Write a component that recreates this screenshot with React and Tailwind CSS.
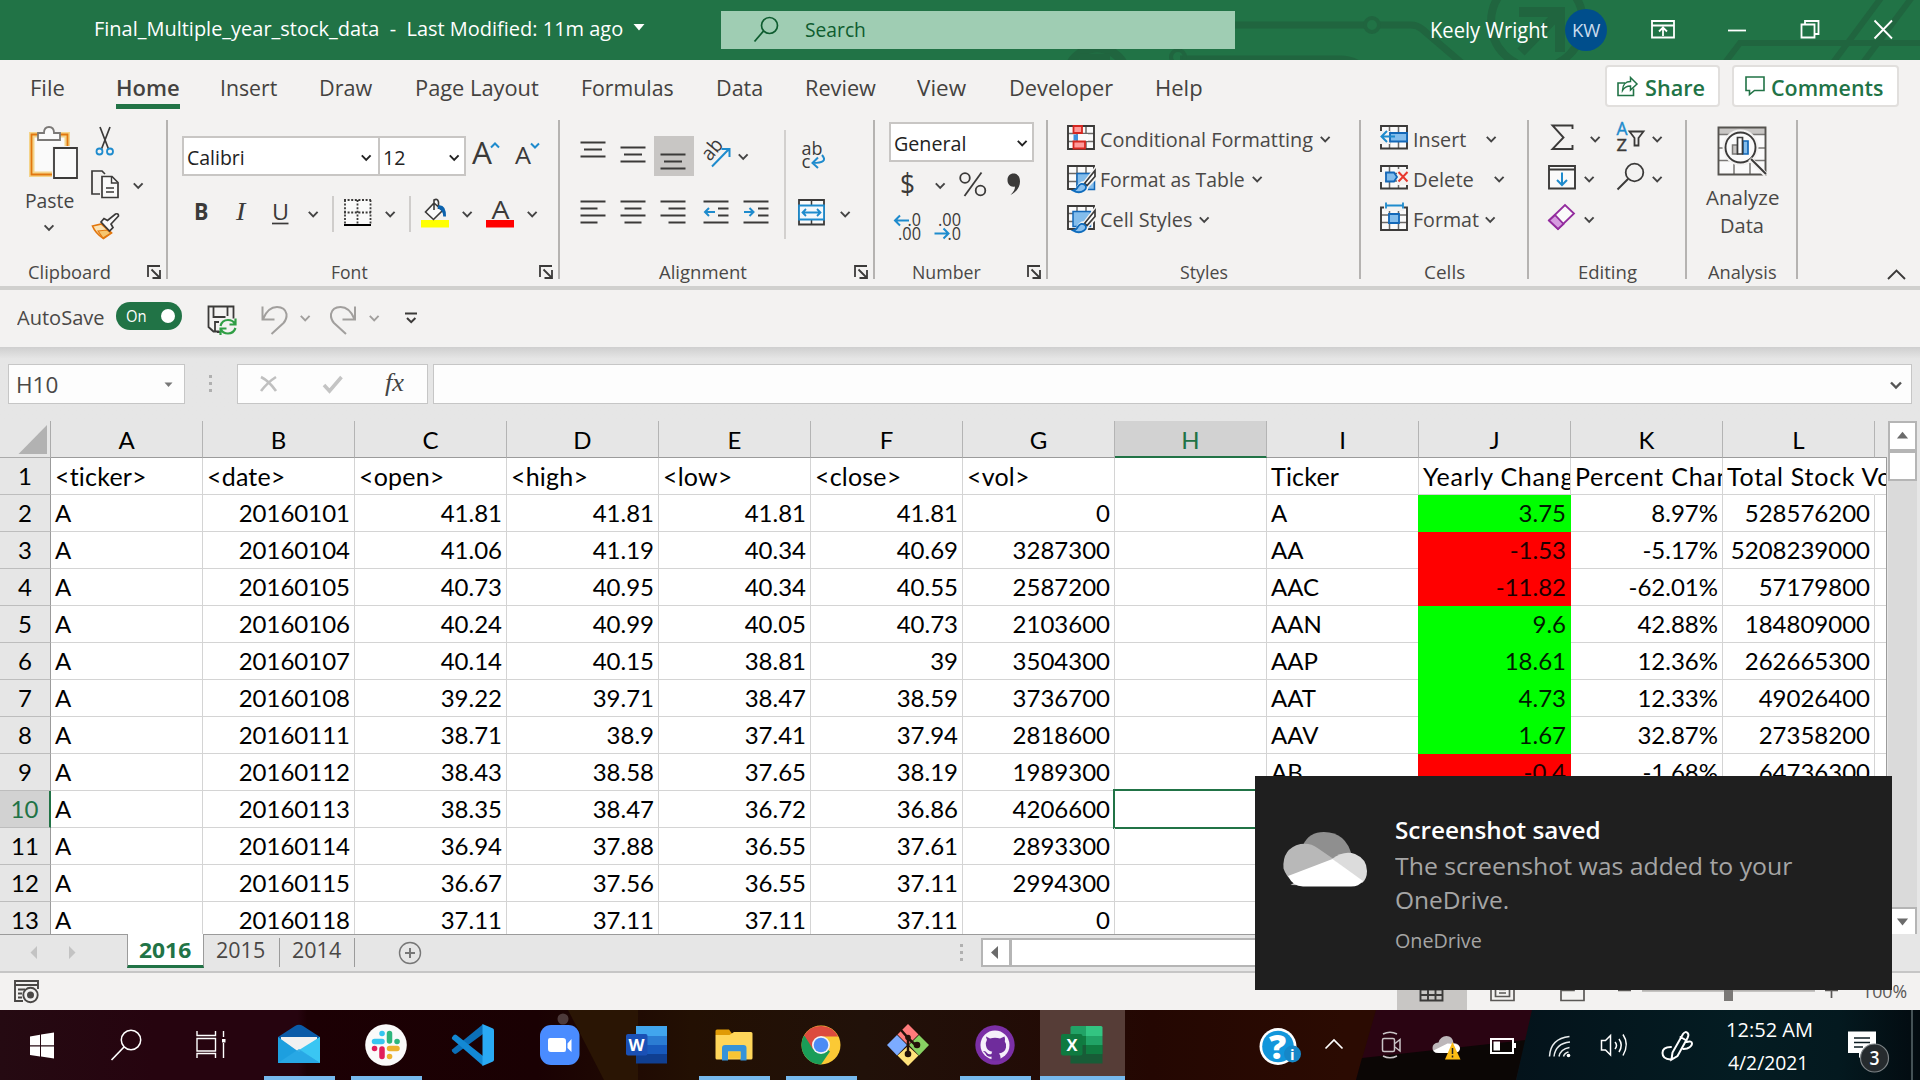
import { useLayoutEffect, useRef } from "react";

/* One line of text, condensed or widened to the width of its box. */
function T({ className = "", children }) {
  const box = useRef(null);
  const line = useRef(null);
  useLayoutEffect(() => {
    const w = line.current.offsetWidth;
    if (w) line.current.style.transform = `scaleX(${box.current.clientWidth / w})`;
  }, []);
  return (
    <div ref={box} className={`shrink-0 whitespace-pre ${className}`}>
      <span ref={line} className="inline-block origin-left">{children}</span>
    </div>
  );
}

/* Drawing whose view box also gives its size. */
function P({ b, className = "", children }) {
  const [, , w, h] = b.split(" ");
  return (
    <svg viewBox={b} width={w} height={h} fill="none" className={`block shrink-0 overflow-visible ${className}`}>
      {children}
    </svg>
  );
}

const INK = "#3b3a39";
const BLUE = "#1e8bcd";

const Cv = ({ x, y, c = "#444" }) => (
  <path d={`M${x + 0.8} ${y + 0.8}l4.4 4.6 4.4-4.6`} stroke={c} strokeWidth="1.9" />
);

const Lines = ({ list, c = INK }) =>
  list.map(([x, y, w]) => <path key={`${x}-${y}`} d={`M${x} ${y}h${w}`} stroke={c} strokeWidth="2" />);

const Launch = ({ className }) => (
  <P b="0 0 14 14" className={className}>
    <path d="M1 12V1h12M4.5 4.5l7.5 7.5M13 5v8H5.5" stroke={INK} strokeWidth="1.8" />
  </P>
);

function Group({ className, label, children }) {
  return (
    <div className={`flex h-[159px] shrink-0 flex-col border-r-2 border-[#b5b3b1] ${className}`}>
      <div className="h-[139px]">{children}</div>
      <div className="flex h-[20px] text-[18.5px] leading-[25px] text-[#4a4846]">{label}</div>
    </div>
  );
}

/* ---------- title bar ---------- */
function TitleBar() {
  return (
    <div className="relative h-[60px] bg-[#217346] text-white">
      <svg viewBox="0 0 1920 60" width="1920" height="60" fill="none" className="absolute inset-0">
        <g stroke="#20653f" strokeWidth="7">
          <path d="M1230 25h137M1377 25h34q6 0 11 4l42 36M1180 59h160q12 0 20 6" />
          <circle cx="1372" cy="25" r="7" strokeWidth="4" />
          <circle cx="1097" cy="78" r="30" strokeWidth="9" />
          <path d="M1080 57h30" />
          <circle cx="1178" cy="57" r="7" strokeWidth="4" />
          <circle cx="1537" cy="22" r="46" strokeWidth="8" />
          <path d="M1519 12h41v40M1560 12l-39 40" strokeWidth="10" />
          <path d="M1724 64l16-21h180M1832 64l52-70M1862 64l60-80" strokeWidth="6" />
        </g>
      </svg>
      <div className="relative flex h-[60px]">
        <T className="ml-[94px] w-[529px] text-[20.5px] leading-[57px]">{"Final_Multiple_year_stock_data  -  Last Modified: 11m ago"}</T>
        <P b="633 0 12 60" className="ml-[10px]"><path d="M633.5 24h11l-5.5 6.5z" fill="#fff" /></P>
        <div className="mt-[11px] ml-[76px] flex h-[38px] w-[514px] bg-[#9fcdb3]">
          <P b="752 11 28 38" className="ml-[31px]">
            <circle cx="769.500" cy="25.500" r="8" stroke="#0e5c2f" strokeWidth="1.7" />
            <path d="M763.500 31l-9 10.500" stroke="#0e5c2f" strokeWidth="1.8" />
          </P>
          <T className="ml-[25px] w-[61px] text-[20.5px] leading-[36px] text-[#0e5c2f]">Search</T>
        </div>
        <T className="ml-[195px] w-[118px] text-[21px] leading-[60px]">Keely Wright</T>
        <div className="mt-[9px] ml-[17px] flex h-[42px] w-[42px] items-center justify-center rounded-full bg-[#004e8c] text-[#c9dcee]">
          <T className="w-[28px] text-[18.5px] leading-[42px]">KW</T>
        </div>
        <P b="1648 0 250 60" className="ml-[41px]">
          <g stroke="#fff" strokeWidth="1.8">
            <path d="M1652 21h22v16.500h-22zM1652 25.500h22M1663 36v-8M1659 31.500l4-4 4 4" />
            <path d="M1728 30.500h18" />
            <path d="M1801.500 24.500h13v13h-13zM1805 24v-3h13.500v13h-3.500" />
            <path d="M1874.500 20.500l17.500 18M1892 20.500l-17.500 18" />
          </g>
        </P>
      </div>
    </div>
  );
}

/* ---------- ribbon tabs ---------- */
function Tabs() {
  return (
    <div className="flex h-[60px] text-[22px] leading-[55px] text-[#444240]">
      <T className="ml-[30px] w-[35px]">File</T>
      <div className="ml-[51px] w-[64px]">
        <T className="h-[44px] w-[64px] font-semibold">Home</T>
        <div className="h-[5px] bg-[#217346]" />
      </div>
      <T className="ml-[40px] w-[57px]">Insert</T>
      <T className="ml-[42px] w-[53px]">Draw</T>
      <T className="ml-[43px] w-[124px]">Page Layout</T>
      <T className="ml-[42px] w-[93px]">Formulas</T>
      <T className="ml-[42px] w-[47px]">Data</T>
      <T className="ml-[42px] w-[71px]">Review</T>
      <T className="ml-[41px] w-[49px]">View</T>
      <T className="ml-[43px] w-[104px]">Developer</T>
      <T className="ml-[42px] w-[48px]">Help</T>
      <div className="mt-[5px] ml-[402px] flex h-[42px] w-[115px] rounded-[4px] border-2 border-[#e1dfdd] bg-white font-semibold text-[#217346]">
        <P b="1615 67 26 38" className="ml-[7px]">
          <path d="M1626 83h-7v12.500h15.500v-7" stroke="#217346" strokeWidth="1.6" />
          <path d="M1623.500 90.500c0-6 3.500-9 8-9v-4l6.500 6.500-6.500 6v-4c-4 0-6 1-8 4.500z" stroke="#217346" strokeWidth="1.5" />
        </P>
        <T className="ml-[5px] w-[60px] leading-[41px]">Share</T>
      </div>
      <div className="mt-[5px] ml-[12px] flex h-[42px] w-[167px] rounded-[4px] border-2 border-[#e1dfdd] bg-white font-semibold text-[#217346]">
        <P b="1744 67 24 38" className="ml-[9px]">
          <path d="M1747 77h18v13.500h-9.500l-5 4v-4h-3.500z" stroke="#217346" strokeWidth="1.6" />
        </P>
        <T className="ml-[4px] w-[112px] leading-[41px]">Comments</T>
      </div>
    </div>
  );
}

/* ---------- ribbon groups ---------- */
function Clipboard() {
  return (
    <Group className="w-[168px]" label={<><T className="ml-[28px] w-[83px]">Clipboard</T><Launch className="mt-[6px] ml-[36px]" /></>}>
      <div className="flex">
        <div className="w-[90px] pt-[6px]">
          <P b="30 126 48 54" className="ml-[30px]">
            <path d="M32 135h35v39H32z" fill="#fafafa" stroke="#f4d48a" strokeWidth="6" />
            <path d="M31.500 134.500h36v40h-36z" stroke="#e2770e" strokeWidth="1.800" />
            <path d="M34.500 137.500h30v34h-30z" fill="#fafafa" />
            <path d="M38 140v-7h6q0-6 5-6t5 6h6v7z" fill="#fafafa" stroke="#7a7876" strokeWidth="1.800" />
            <path d="M52 146h27v34H52z" fill="#f3f2f1" />
            <path d="M54 148h23v30H54z" fill="#fafafa" stroke={INK} strokeWidth="1.800" />
          </P>
          <T className="mt-[5px] ml-[25px] w-[49px] text-[20.5px] leading-[30px] text-[#444]">Paste</T>
          <P b="44 224 12 8" className="mt-[9px] ml-[44px]"><Cv x={43.800} y={224.500} /></P>
        </div>
        <div>
          <P b="90 120 30 40">
            <path d="M100 127l8.500 22M110 127l-8.500 22" stroke={INK} strokeWidth="1.700" />
            <circle cx="99.500" cy="151.500" r="3" stroke={BLUE} strokeWidth="1.800" />
            <circle cx="110" cy="151.500" r="3" stroke={BLUE} strokeWidth="1.800" />
          </P>
          <P b="90 165 56 38" className="mt-[5px]">
            <path d="M100 194h-8v-23h10l3 3" stroke={INK} strokeWidth="1.700" />
            <path d="M102 176.500h10l6 6v15h-16z" fill="#fafafa" stroke={INK} strokeWidth="1.700" />
            <path d="M111.500 177v6h6M106 188h8M106 192h8" stroke={INK} strokeWidth="1.400" />
            <Cv x={133} y={182.500} />
          </P>
          <P b="90 208 32 36" className="mt-[5px]">
            <path d="M92.500 226l9-2 10 9-8 5.500q-8-5-11-12.500z" fill="#fbe3b4" stroke="#e2770e" strokeWidth="1.700" />
            <path d="M98 231l9-1 4 3-8 5z" fill="#f6c66f" stroke="#e2770e" strokeWidth="1.200" />
            <path d="M101 222l3-3.500 3.500 2 8-6.500q3-1 3 2l-7.500 8 2 3.500-3.500 3.500z" fill="#fafafa" stroke={INK} strokeWidth="1.700" />
          </P>
        </div>
      </div>
    </Group>
  );
}

function FontGroup() {
  return (
    <Group className="w-[392px]" label={<><T className="ml-[163px] w-[37px]">Font</T><Launch className="mt-[6px] ml-[171px]" /></>}>
      <div className="flex pt-[16px] text-[20.500px]">
        <div className="mr-[-2px] ml-[14px] flex h-[40px] w-[198px] border-2 border-[#c8c6c4] bg-white text-[#222]">
          <T className="ml-[3px] w-[58px] leading-[38px]">Calibri</T>
          <P b="360 138 14 36" className="ml-[115px]"><Cv x={361} y={154.500} c="#222" /></P>
        </div>
        <div className="flex h-[40px] w-[88px] border-2 border-[#c8c6c4] bg-white text-[#222]">
          <T className="ml-[3px] w-[22px] leading-[38px]">12</T>
          <P b="448 138 14 36" className="ml-[43px]"><Cv x={449} y={154.500} c="#222" /></P>
        </div>
        <P b="470 136 74 40" className="ml-[4px]">
          <text x="472" y="164" textLength="20" lengthAdjust="spacingAndGlyphs" fontSize="31" fill={INK}>A</text>
          <text x="515" y="164" textLength="16" lengthAdjust="spacingAndGlyphs" fontSize="23" fill={INK}>A</text>
          <path d="M491 147.500l4-4 4 4M531 143.500l4 4 4-4" stroke={BLUE} strokeWidth="2" />
        </P>
      </div>
      <div className="mt-[20px] flex h-[36px] text-[22px] leading-[31px] text-[#3b3a39]">
        <T className="ml-[26px] w-[14px] text-[23px] leading-[30px] font-bold">B</T>
        <T className="ml-[28px] w-[9px] font-[Liberation_Serif] text-[25px] leading-[31px] italic">I</T>
        <T className="ml-[27px] w-[17px]">U</T>
        <P b="270 196 50 36" className="ml-[-19px]">
          <path d="M272 223.500h16.500" stroke={INK} strokeWidth="1.700" />
          <Cv x={308} y={211} />
        </P>
        <div className="ml-[12px] w-[2px] bg-[#cfcdcb]" />
        <P b="342 196 56 36" className="ml-[8px]">
          <path d="M345 200h26v24h-26z" fill="#fafafa" />
          <path d="M344 200h27M345 200v24M370.500 200v24M357.500 200v24M344 212.500h27" stroke={INK} strokeWidth="1.800" strokeDasharray="2 1.600" />
          <path d="M344 225h27" stroke="#000" strokeWidth="2" />
          <Cv x={385} y={211} />
        </P>
        <div className="ml-[11px] w-[2px] bg-[#cfcdcb]" />
        <P b="419 196 56 36" className="ml-[8px]">
          <path d="M421 220h28v7.500h-28z" fill="#ff0" />
          <path d="M434 203l-8.500 9 8 7.500 9-9zM434 210v-10q3.500-2 4.500 2v7" fill="#fafafa" stroke={INK} strokeWidth="1.600" />
          <path d="M438 205.500q8-1.500 8 11h-2.800q0-6-5.200-8z" fill="#0b62ad" />
          <Cv x={462} y={211} />
        </P>
        <P b="484 196 60 36" className="ml-[9px]">
          <text x="491.500" y="218.500" textLength="18" lengthAdjust="spacingAndGlyphs" fontSize="26" fill={INK}>A</text>
          <path d="M486 220h28v7.500h-28z" fill="#f00" />
          <Cv x={527} y={211} />
        </P>
      </div>
    </Group>
  );
}

function Alignment() {
  return (
    <Group className="w-[315px]" label={<><T className="ml-[99px] w-[88px]">Alignment</T><Launch className="mt-[6px] ml-[107px]" /></>}>
      <div className="flex">
        <div className="w-[224px] pt-[16px]">
          <div className="flex">
            <P b="578 136 72 40" className="ml-[18px]">
              <Lines list={[[580.5, 142.500, 25], [584, 149.500, 18], [580.5, 156.500, 25], [620.5, 147.500, 25], [624, 154.500, 18], [620.5, 161.500, 25]]} />
            </P>
            <P b="654 136 40 40" className="ml-[4px] bg-[#c8c6c4]">
              <Lines list={[[660.500, 154.500, 25], [664, 161.500, 18], [660.500, 168.500, 25]]} />
            </P>
            <P b="698 136 54 40" className="ml-[4px]">
              <text x="710" y="162" transform="rotate(-50 710 162)" fontSize="20" textLength="22" lengthAdjust="spacingAndGlyphs" fill={INK}>ab</text>
              <path d="M712 166.500l17-17.500M721.500 149h8v8" stroke={BLUE} strokeWidth="2" />
              <Cv x={738} y={153.500} />
            </P>
          </div>
          <P b="578 192 196 40" className="mt-[16px] ml-[18px]">
            <Lines list={[[580.5, 201.500, 25], [580.5, 208.500, 17], [580.5, 215.500, 25], [580.5, 222.500, 17], [620.5, 201.500, 25], [624.5, 208.500, 17], [620.5, 215.500, 25], [624.5, 222.500, 17], [660.500, 201.500, 25], [668.500, 208.500, 17], [660.500, 215.500, 25], [668.500, 222.500, 17], [703.500, 201.500, 25], [718, 208.500, 10.500], [718, 215.500, 10.500], [703.500, 222.500, 25], [743.500, 201.500, 25], [758, 208.500, 10.500], [758, 215.500, 10.500], [743.500, 222.500, 25]]} />
            <path d="M715 212h-10M709 208l-4 4 4 4M744 212h10M749.500 208l4 4-4 4" stroke={BLUE} strokeWidth="2" />
          </P>
        </div>
        <div className="mt-[10px] h-[109px] w-[2px] bg-[#d2d0ce]" />
        <div className="pt-[16px]">
          <P b="798 136 34 40" className="ml-[12px]">
            <text x="801.500" y="155" fontSize="19" textLength="21" lengthAdjust="spacingAndGlyphs" fill={INK}>ab</text>
            <text x="801.500" y="167.500" fontSize="19" textLength="9" lengthAdjust="spacingAndGlyphs" fill={INK}>c</text>
            <path d="M822 155q7 8-9.500 8M818 157.500l-5.500 5.500 5.500 5" stroke={BLUE} strokeWidth="2" />
          </P>
          <P b="796 192 60 40" className="mt-[16px] ml-[10px]">
            <path d="M799 200h25v24.500h-25z" fill="#fafafa" stroke={INK} strokeWidth="1.800" />
            <path d="M811.500 200v25" stroke={INK} strokeWidth="1.500" />
            <path d="M799 205.500h25v14h-25z" fill="#f3f8fc" stroke={BLUE} strokeWidth="1.800" />
            <path d="M802.500 212.500h18M806 209l-3.500 3.500 3.500 3.500M817 209l3.500 3.500-3.500 3.500" stroke={BLUE} strokeWidth="1.800" />
            <Cv x={840} y={211} />
          </P>
        </div>
      </div>
    </Group>
  );
}

function NumberGroup() {
  return (
    <Group className="w-[173px]" label={<><T className="ml-[37px] w-[69px]">Number</T><Launch className="mt-[6px] ml-[46px]" /></>}>
      <div className="pt-[2px] pl-[14px]">
        <div className="flex h-[40px] w-[145px] border-2 border-[#c8c6c4] bg-white text-[#222]">
          <T className="ml-[3px] w-[72px] text-[20.500px] leading-[38px]">General</T>
          <P b="1016 124 14 36" className="ml-[50px]"><Cv x={1017} y={140} c="#222" /></P>
        </div>
      </div>
      <P b="889 164 145 40" className="mt-[2px] ml-[14px]">
        <text x="900" y="194" fontSize="30" textLength="15" lengthAdjust="spacingAndGlyphs" fill={INK}>$</text>
        <Cv x={935} y={182.500} />
        <circle cx="965" cy="178" r="4.800" stroke={INK} strokeWidth="1.800" />
        <circle cx="980.500" cy="190.500" r="4.800" stroke={INK} strokeWidth="1.800" />
        <path d="M981.500 172.500l-17 23.500" stroke={INK} strokeWidth="1.800" />
        <path d="M1013.500 173.500c4.500 0 6.500 3.500 6.500 8 0 6.500-4.500 11-9.500 13.500 3-3 4.500-5.500 4.500-8.500-4.500 1-7.500-2-7.500-6.500 0-4 2.500-6.500 6-6.500z" fill={INK} />
      </P>
      <P b="889 208 145 36" className="mt-[4px] ml-[14px]">
        <g fontSize="18.500" fill={INK}>
          <text x="907.500" y="225.500" textLength="13.500" lengthAdjust="spacingAndGlyphs">.0</text>
          <text x="898" y="239.500" textLength="23" lengthAdjust="spacingAndGlyphs">.00</text>
          <text x="938" y="225.500" textLength="23" lengthAdjust="spacingAndGlyphs">.00</text>
          <text x="947.500" y="239.500" textLength="13.500" lengthAdjust="spacingAndGlyphs">.0</text>
        </g>
        <path d="M909 220.500h-14M900 215.500l-5 5 5 5M934.500 233.500h14M943.500 228.500l5 5-5 5" stroke={BLUE} strokeWidth="2" />
      </P>
    </Group>
  );
}

/* 28 x 25 table icon frame */
const Frame = ({ y }) => (
  <>
    <path d={`M1068 ${y}h26v23h-26z`} fill="#fafafa" />
    <path d={`M1068 ${y + 7.500}h26M1068 ${y + 15.500}h26M1077 ${y}v23M1086 ${y}v23`} stroke="#6b6967" strokeWidth="1.500" />
    <path d={`M1068 ${y}h26v23h-26z`} stroke={INK} strokeWidth="1.900" />
  </>
);

const Brush = ({ y }) => (
  <g>
    <path d={`M1077 ${y + 25}q2-8 8-8l10-13v8l-8 8q-1 6-7 6z`} fill="#f3f2f1" stroke="#f3f2f1" strokeWidth="4" />
    <path d={`M1095 ${y + 4.500}l-10.500 13 2.500 2 8-9z`} fill="#fff" stroke={INK} strokeWidth="1.700" />
    <path d={`M1073 ${y + 24.500}q4-1 5-4 3-4.500 7-1.500 2.500 3-1 5.500-5 3.500-11 0z`} fill="#8cc1ee" stroke="#0f6cbd" strokeWidth="1.800" />
  </g>
);

function Styles() {
  return (
    <Group className="w-[313px]" label={<T className="ml-[132px] w-[48px]">Styles</T>}>
      <div className="text-[20.500px] leading-[38px] text-[#4a4846]">
        <div className="flex h-[40px]">
          <P b="1065 120 32 40" className="ml-[17px]">
            <Frame y={126} />
            <path d="M1073.500 126h8.500v7h-8.500z" fill="#ff9a9a" stroke="#d6261f" strokeWidth="1.800" />
            <path d="M1073.500 134.500h4.500v6h-4.500z" fill="#3d8fdd" />
            <path d="M1078 134h10v7h-10z" fill="#fafafa" />
            <path d="M1073.500 141.500h11.500v7h-11.500z" fill="#ff9a9a" stroke="#d6261f" strokeWidth="1.800" />
          </P>
          <T className="ml-[3px] w-[213px]">Conditional Formatting</T>
          <P b="1318 120 16 40" className="ml-[5px]"><Cv x={1320} y={136} /></P>
        </div>
        <div className="flex h-[40px]">
          <P b="1065 160 32 40" className="ml-[17px]">
            <Frame y={166} />
            <path d="M1077 173.500h17.500v16H1077z" fill="#83bdec" stroke="#1368b8" strokeWidth="1.500" />
            <Brush y={166} />
          </P>
          <T className="ml-[3px] w-[145px]">Format as Table</T>
          <P b="1250 160 16 40" className="ml-[5px]"><Cv x={1252} y={176} /></P>
        </div>
        <div className="flex h-[40px]">
          <P b="1065 200 32 40" className="ml-[17px]">
            <Frame y={206} />
            <path d="M1073 211.500h17.500v15H1073z" fill="#83bdec" stroke="#1368b8" strokeWidth="1.500" />
            <Brush y={206} />
          </P>
          <T className="ml-[3px] w-[92px]">Cell Styles</T>
          <P b="1196 200 16 40" className="ml-[4px]"><Cv x={1199} y={216.500} /></P>
        </div>
      </div>
    </Group>
  );
}

const Sheet = ({ y }) => (
  <>
    <path d={`M1381 ${y}h26v22.500h-26z`} fill="#fafafa" />
    <path d={`M1381 ${y + 7.500}h26M1381 ${y + 15}h26M1389.500 ${y}v22.500M1398.500 ${y}v22.500`} stroke="#6b6967" strokeWidth="1.500" />
    <path d={`M1381 ${y}h26v22.500h-26z`} stroke={INK} strokeWidth="1.900" />
  </>
);

function Cells() {
  return (
    <Group className="w-[168px]" label={<T className="ml-[63px] w-[41px]">Cells</T>}>
      <div className="text-[20.500px] leading-[38px] text-[#4a4846]">
        <div className="flex h-[40px]">
          <P b="1378 120 32 40" className="ml-[17px]">
            <Sheet y={126} />
            <path d="M1378 131h12v13h-12z" fill="#f3f2f1" />
            <path d="M1390 133h17v8.500h-17z" fill="#83bdec" stroke="#1368b8" strokeWidth="1.800" />
            <path d="M1395 136.500h-13.500M1387 131l-5.500 5.500 5.500 5.500" stroke={BLUE} strokeWidth="2" />
          </P>
          <T className="ml-[3px] w-[53px]">Insert</T>
          <P b="1484 120 16 40" className="ml-[18px]"><Cv x={1486} y={136} /></P>
        </div>
        <div className="flex h-[40px]">
          <P b="1378 160 32 40" className="ml-[17px]">
            <Sheet y={166} />
            <path d="M1378 172h7v10h-7zM1397 169h12v16h-12z" fill="#f3f2f1" />
            <path d="M1386 172.500h8l3 4.500-3 4.500h-8z" fill="#83bdec" stroke="#1368b8" strokeWidth="1.800" />
            <path d="M1398.500 172l9 9.500M1407.500 172l-9 9.500" stroke="#e8382e" strokeWidth="2" />
          </P>
          <T className="ml-[3px] w-[61px]">Delete</T>
          <P b="1492 160 16 40" className="ml-[18px]"><Cv x={1494} y={176} /></P>
        </div>
        <div className="flex h-[40px]">
          <P b="1378 200 32 40" className="ml-[17px]">
            <Sheet y={207.500} />
            <path d="M1384 202h20v9h-20z" fill="#f3f2f1" />
            <path d="M1389 214h10v9h-10z" fill="#83bdec" stroke="#1368b8" strokeWidth="1.800" />
            <path d="M1386 205.500h17M1386 202.500v6M1403 202.500v6" stroke={BLUE} strokeWidth="1.800" />
          </P>
          <T className="ml-[3px] w-[66px]">Format</T>
          <P b="1483 200 16 40" className="ml-[4px]"><Cv x={1485} y={216.500} /></P>
        </div>
      </div>
    </Group>
  );
}

function Editing() {
  return (
    <Group className="w-[158px]" label={<T className="ml-[49px] w-[59px]">Editing</T>}>
      <div className="grid grid-cols-[70px_60px] pl-[15px]">
        <P b="1544 120 60 40">
          <path d="M1572.500 129v-3.500h-20l11 12-11 11.500h20v-4" stroke={INK} strokeWidth="1.900" />
          <Cv x={1590} y={136} />
        </P>
        <P b="1614 120 60 40">
          <text x="1616.500" y="135" fontSize="18" textLength="11" lengthAdjust="spacingAndGlyphs" fill={BLUE} stroke={BLUE} strokeWidth=".4">A</text>
          <text x="1616.500" y="151" fontSize="17" textLength="10.500" lengthAdjust="spacingAndGlyphs" fill={INK} stroke={INK} strokeWidth=".4">Z</text>
          <path d="M1629.500 131.500h14l-5 6.500v7.500h-4v-7.500z" stroke={INK} strokeWidth="1.800" />
          <Cv x={1652} y={136} />
        </P>
        <P b="1544 160 60 40">
          <path d="M1549 166h26v22.500h-26zM1549 169.500h26" fill="#fafafa" stroke={INK} strokeWidth="1.900" />
          <path d="M1562 172.500v12M1557 180l5 5 5-5" stroke={BLUE} strokeWidth="2" />
          <Cv x={1584} y={176} />
        </P>
        <P b="1614 160 60 40">
          <circle cx="1634.500" cy="172.500" r="8.800" stroke={INK} strokeWidth="1.800" />
          <path d="M1628 179l-10.500 10.500" stroke={INK} strokeWidth="1.900" />
          <Cv x={1652} y={176} />
        </P>
        <P b="1544 200 60 40">
          <path d="M1549 220.500l16-15.500 9 8.500-16 15.500z" fill="#fafafa" stroke="#932c9e" strokeWidth="1.800" />
          <path d="M1549 220.500l6-5.500 8.500 9-5.500 5z" fill="#d69be0" stroke="#932c9e" strokeWidth="1.800" />
          <Cv x={1584} y={216.500} />
        </P>
      </div>
    </Group>
  );
}

function Analysis() {
  return (
    <Group className="w-[111px]" label={<T className="ml-[21px] w-[69px]">Analysis</T>}>
      <P b="1716 120 52 58" className="ml-[29px]">
        <path d="M1718.500 127.500h47v47h-47z" fill="#fafafa" />
        <path d="M1718.500 127.500h47v6.500h-47z" fill="#c8c6c4" />
        <path d="M1718 134.500h48M1718 148h48M1718 160.500h48M1734 160v14M1750 160v14" stroke="#7a7876" strokeWidth="1.500" />
        <path d="M1718.500 127.500h47v47h-47z" stroke="#55534f" strokeWidth="1.900" />
        <circle cx="1740.500" cy="147.500" r="18" fill="#f3f2f1" />
        <circle cx="1740.500" cy="147.500" r="15" fill="#fafafa" stroke={INK} strokeWidth="1.900" />
        <path d="M1750 159l16 16" stroke="#f3f2f1" strokeWidth="5" />
        <path d="M1751 159l15 15" stroke={INK} strokeWidth="2" />
        <path d="M1732.500 145h5v9h-5z" fill="#c8c6c4" stroke="#7a7876" strokeWidth="1.500" />
        <path d="M1743 141h5v13h-5z" fill="#83bdec" stroke="#1368b8" strokeWidth="1.700" />
        <path d="M1737.500 137.500h5v16.500h-5z" fill="#fff" stroke={INK} strokeWidth="1.700" />
      </P>
      <div className="text-[20.500px] leading-[28px] text-[#4a4846]">
        <T className="mt-[5px] ml-[19px] w-[74px]">Analyze</T>
        <T className="ml-[33px] w-[44px]">Data</T>
      </div>
    </Group>
  );
}

/* ---------- quick access toolbar ---------- */
function QuickAccess() {
  return (
    <div className="flex h-[57px] bg-[#f3f2f1]">
      <T className="ml-[17px] w-[88px] text-[20.500px] leading-[54px] text-[#4a4846]">AutoSave</T>
      <div className="mt-[12px] ml-[11px] flex h-[28px] w-[66px] rounded-full bg-[#217346] text-white">
        <T className="ml-[10px] w-[21px] text-[15.500px] leading-[29px]">On</T>
        <div className="mt-[7px] ml-[14px] h-[14px] w-[14px] rounded-full bg-white" />
      </div>
      <P b="204 290 240 57" className="ml-[22px]">
        <path d="M221 332h-4M219 331.500h-5.500l-5-4.500V306.500h25v12" stroke={INK} strokeWidth="1.800" />
        <path d="M213.500 307v10h12M227.500 307v9M215 331v-9h4" stroke={INK} strokeWidth="1.800" />
        <path d="M220.500 326q1.500-6 7.500-6 5 0 7 4M235.500 318.500v6h-6M235.500 328q-2 5.500-7.500 5.500-5 0-7-4M220.500 335v-6.500h6" stroke="#2f9e44" strokeWidth="2.200" />
        <path d="M262.500 306.500v13h12M263 319q5-12 14-12 8 0 9.500 7 .5 5-3 9l-12 11" stroke="#a19f9d" strokeWidth="2" />
        <Cv x={300} y={315} c="#a19f9d" />
        <path d="M355 306.500v13h-12.500M354.500 319q-5-12-14-12-8 0-9.500 7-.5 5 3 9l12 11" stroke="#a19f9d" strokeWidth="2" />
        <Cv x={369} y={315} c="#a19f9d" />
        <path d="M405 313.500h12M407 318l4.200 4.200 4.200-4.200" stroke={INK} strokeWidth="2" />
      </P>
    </div>
  );
}

/* ---------- formula bar ---------- */
function FormulaBar() {
  return (
    <div className="h-[74px] bg-linear-to-b from-[#cfcfcf] via-[#e6e6e6] via-[16%] to-[#e6e6e6] pt-[17px]">
      <div className="flex h-[40px]">
        <div className="ml-[8px] flex w-[177px] border border-[#c6c6c6] bg-[#fdfdfd]">
          <T className="ml-[7px] w-[42px] text-[22.500px] leading-[40px] text-[#4a4846]">H10</T>
          <P b="162 365 12 38" className="ml-[104px]"><path d="M164.500 382.500h8l-4 4.500z" fill="#777" /></P>
        </div>
        <P b="205 364 10 40" className="ml-[20px]"><path d="M209 375h3v3h-3zM209 382h3v3h-3zM209 389h3v3h-3z" fill="#b0b0b0" /></P>
        <div className="ml-[22px] flex w-[191px] border border-[#c6c6c6] bg-[#fdfdfd]">
          <P b="256 365 90 38" className="ml-[18px]">
            <path d="M261 377q8 4 15 14M276 377q-8 5-15 14" stroke="#c0c0c0" strokeWidth="2.600" />
            <path d="M324 385l5.500 6 12-14" stroke="#c4c4c4" strokeWidth="3.500" />
          </P>
          <T className="ml-[39px] w-[19px] font-[Liberation_Serif] text-[25px] leading-[36px] text-[#444] italic">fx</T>
        </div>
        <div className="ml-[5px] flex w-[1479px] justify-end border border-[#c6c6c6] bg-[#fdfdfd]">
          <P b="1888 365 16 38" className="mr-[7px]"><path d="M1891 382.500l5 5 5-5" stroke="#555" strokeWidth="2.400" /></P>
        </div>
      </div>
    </div>
  );
}

/* ---------- sheet ---------- */
const COLS = "ABCDEFGHIJKL".split("");
const ROWS = [
  ["<ticker>", "<date>", "<open>", "<high>", "<low>", "<close>", "<vol>", "", "Ticker", "Yearly Change", "Percent Change", "Total Stock Volume"],
  ["A", "20160101", "41.81", "41.81", "41.81", "41.81", "0", "", "A", "3.75", "8.97%", "528576200"],
  ["A", "20160104", "41.06", "41.19", "40.34", "40.69", "3287300", "", "AA", "-1.53", "-5.17%", "5208239000"],
  ["A", "20160105", "40.73", "40.95", "40.34", "40.55", "2587200", "", "AAC", "-11.82", "-62.01%", "57179800"],
  ["A", "20160106", "40.24", "40.99", "40.05", "40.73", "2103600", "", "AAN", "9.6", "42.88%", "184809000"],
  ["A", "20160107", "40.14", "40.15", "38.81", "39", "3504300", "", "AAP", "18.61", "12.36%", "262665300"],
  ["A", "20160108", "39.22", "39.71", "38.47", "38.59", "3736700", "", "AAT", "4.73", "12.33%", "49026400"],
  ["A", "20160111", "38.71", "38.9", "37.41", "37.94", "2818600", "", "AAV", "1.67", "32.87%", "27358200"],
  ["A", "20160112", "38.43", "38.58", "37.65", "38.19", "1989300", "", "AB", "-0.4", "-1.68%", "64736300"],
  ["A", "20160113", "38.35", "38.47", "36.72", "36.86", "4206600", "", "", "", "", ""],
  ["A", "20160114", "36.94", "37.88", "36.55", "37.61", "2893300", "", "", "", "", ""],
  ["A", "20160115", "36.67", "37.56", "36.55", "37.11", "2994300", "", "", "", "", ""],
  ["A", "20160118", "37.11", "37.11", "37.11", "37.11", "0", "", "", "", "", ""],
];

function cellClass(r, c, v) {
  const line = "w-[152px] border-b-[#d4d4d4] pl-[4px]";
  if (r === 0) {
    const head = c > 8 ? "text-[25px] tracking-[0.75px]" : "text-[25px] tracking-[0.2px]";
    return `${line} ${head} ${c === 11 ? "border-r-transparent" : "overflow-hidden border-r-[#d4d4d4]"}`;
  }
  const side = c === 0 || c === 8 ? "justify-start" : "justify-end";
  if (c === 9 && v) {
    return v[0] === "-"
      ? `-ml-px w-[153px] ${side} bg-[#ff0000] border-[#ff0000] text-[#1c0000]`
      : `-ml-px w-[153px] ${side} bg-[#00ff00] border-[#00ff00] text-[#001a00]`;
  }
  return `${line} ${side} border-r-[#d4d4d4]`;
}

function Grid() {
  return (
    <div className="flex h-[513px] bg-[#e6e6e6] font-[Lato] text-[24px] text-black">
      <div className="w-[1887px] overflow-hidden">
        <div className="flex h-[37px] leading-[37px]">
          <P b="0 421 51 37"><path d="M18.500 454h28.500v-29z" fill="#b2b2b2" /><path d="M50.500 421v37M0 457.500h51" stroke="#ababab" /></P>
          {COLS.map((c) => (
            <div
              key={c}
              className={`h-[37px] w-[152px] shrink-0 border-r border-r-[#b4b4b4] text-center ${c === "H" ? "border-b-2 border-b-[#217346] bg-[#d2d2d2] text-[#217346]" : "border-b border-b-[#9b9b9b]"}`}
            >
              {c}
            </div>
          ))}
          <div className="h-[37px] w-[12px] border-b border-b-[#9b9b9b]" />
        </div>
        <div className="h-[476px] overflow-hidden border-r border-r-[#9b9b9b] bg-white">
          {ROWS.map((row, r) => (
            <div key={r} className="flex h-[37px] leading-[36px]">
              <div className={`w-[51px] shrink-0 border-b border-b-[#bdbdbd] text-center ${r === 9 ? "border-r-2 border-r-[#217346] bg-[#d2d2d2] text-[#217346]" : "border-r border-r-[#9b9b9b] bg-[#e6e6e6]"}`}>
                {r + 1}
              </div>
              {row.map((v, c) => (
                <div key={c} className={`relative flex shrink-0 border-r border-b pr-[4px] whitespace-nowrap ${cellClass(r, c, v)}`}>
                  {v}
                  {r === 9 && c === 7 && <div className="absolute -top-[2px] -left-[2px] h-[40px] w-[155px] border-2 border-[#217346]" />}
                </div>
              ))}
              <div className="w-[12px] shrink-0 border-b border-b-[#d4d4d4]" />
            </div>
          ))}
        </div>
      </div>
      <div className="ml-[1px] flex w-[29px] flex-col bg-[#dadada]">
        <P b="0 0 29 30" className="border-2 border-[#b5b5b5] bg-white"><path d="M8 18h13l-6.500-8z" fill="#6b6b6b" /></P>
        <div className="h-[30px] border-2 border-[#b5b5b5] bg-white" />
        <P b="0 0 29 29" className="mt-auto mb-[-2px] border-2 border-[#b5b5b5] bg-white"><path d="M8 11h13l-6.500 8z" fill="#6b6b6b" /></P>
      </div>
    </div>
  );
}

function SheetTabs() {
  return (
    <div className="flex h-[39px] border-b-2 border-b-[#c6c6c6] bg-[#e6e6e6] text-[21.500px] text-[#4a4846]">
      <P b="0 934 127 37"><path d="M37 946v13l-6.500-6.500zM69 946v13l6.500-6.500z" fill="#c3c3c3" /><path d="M0 934.500h127" stroke="#9b9b9b" /></P>
      <div className="h-[34px] w-[77px] border-r border-b-[3px] border-l border-r-[#9b9b9b] border-b-[#217346] border-l-[#9b9b9b] bg-white">
        <T className="ml-[11px] w-[52px] leading-[31px] font-bold text-[#217346]">2016</T>
      </div>
      <div className="flex w-[1682px] border-t border-t-[#9b9b9b]">
        <T className="ml-[12px] w-[49px] leading-[30px]">2015</T>
        <div className="mt-[3px] ml-[14px] h-[29px] w-px bg-[#9b9b9b]" />
        <T className="ml-[12px] w-[49px] leading-[30px]">2014</T>
        <div className="mt-[3px] ml-[13px] h-[29px] w-px bg-[#9b9b9b]" />
        <P b="398 935 24 36" className="ml-[43px]">
          <circle cx="410" cy="953" r="10.500" stroke="#777" strokeWidth="1.400" />
          <path d="M405 953h10M410 948v10" stroke="#777" strokeWidth="2" />
        </P>
        <P b="955 935 12 36" className="ml-[533px]"><path d="M960 944h3v3h-3zM960 951h3v3h-3zM960 958h3v3h-3z" fill="#b0b0b0" /></P>
        <div className="mt-[3px] ml-[14px] flex h-[29px] w-[880px] border-2 border-[#b5b5b5] bg-white">
          <P b="983 940 26 25"><path d="M998 946v13l-7-6.500z" fill="#6b6b6b" /></P>
          <div className="w-[3px] bg-[#b5b5b5]" />
        </div>
      </div>
    </div>
  );
}

function StatusBar() {
  return (
    <div className="flex h-[37px] bg-[#f3f2f1]">
      <P b="12 973 30 37" className="ml-[12px]">
        <path d="M23 1001h-8v-20h23v8M15 985h23M18 989.500h7M18 993.500h4M18 997.500h4" stroke="#4a4846" strokeWidth="1.900" />
        <circle cx="30.500" cy="995" r="7.200" stroke="#4a4846" strokeWidth="1.900" />
        <circle cx="30.500" cy="995" r="3.500" fill="#4a4846" />
      </P>
      <P b="1397 973 70 37" className="ml-[1355px] bg-[#c8c6c4]">
        <path d="M1420.500 984h22v16.500h-22zM1420.500 989.500h22M1420.500 995h22M1428 984v17M1435.500 984v17" stroke={INK} strokeWidth="1.900" />
      </P>
      <P b="1467 973 380 37">
        <path d="M1491 980h23v20.500h-23zM1495.500 984.500h14v12h-14zM1499 989.500h7M1499 993h7" stroke="#5a5856" strokeWidth="1.700" />
        <path d="M1561 984h23v16.500h-23zM1561 990.500h13v-5" stroke="#5a5856" strokeWidth="1.700" />
        <path d="M1618 990.500h13M1825 990.500h13M1831.500 984v14" stroke="#5a5856" strokeWidth="1.700" />
        <path d="M1642 990.500h173" stroke="#b5b3b1" strokeWidth="2.500" />
        <path d="M1724 982h9v19h-9z" fill="#7a7876" />
      </P>
      <T className="ml-[15px] w-[45px] text-[18.500px] leading-[36px] text-[#5a5856]">100%</T>
    </div>
  );
}

/* ---------- taskbar ---------- */
const Run = ({ x, w = 71 }) => <path d={`M${x} 1076h${w}v4h-${w}z`} fill="#76b9ed" />;

function Taskbar() {
  return (
    <div className="relative flex h-[70px] bg-[#1c0306]">
      <svg viewBox="0 1010 1920 70" width="1920" height="70" className="absolute inset-0">
        <defs>
          <linearGradient id="wall" x1="0" x2="1">
            <stop offset="0" stopColor="#250a12" />
            <stop offset=".08" stopColor="#26040f" />
            <stop offset=".155" stopColor="#26040f" />
            <stop offset=".16" stopColor="#1c0004" />
            <stop offset=".28" stopColor="#1a0103" />
            <stop offset=".36" stopColor="#231003" />
            <stop offset=".45" stopColor="#211109" />
            <stop offset=".52" stopColor="#220d07" />
            <stop offset=".6" stopColor="#240702" />
            <stop offset=".7" stopColor="#2b0b02" />
          </linearGradient>
          <linearGradient id="teal" x1="0" x2="1">
            <stop offset="0" stopColor="#04131b" />
            <stop offset=".55" stopColor="#041c22" />
            <stop offset=".8" stopColor="#04191f" />
            <stop offset="1" stopColor="#030b10" />
          </linearGradient>
        </defs>
        <path d="M0 1010h1920v70H0z" fill="url(#wall)" />
        <path d="M568 1010h70v70h-34z" fill="#2a1504" />
        <circle cx="563" cy="1019" r="5.500" fill="#4d3a3b" />
        <path d="M1376 1010h156l-16 70h-160z" fill="#2a0412" />
        <path d="M1362 1058l164-18-10 40h-160z" fill="#0b0605" />
        <path d="M1532 1010h388v70h-404z" fill="url(#teal)" />
      </svg>
      <div className="relative flex">
        <P b="0 1010 84 70"><path d="M30 1036.500l10-1.700v10.400H30zM41 1034.600l13-2.100v12.700H41zM30 1046.500h10v10l-10-1.500zM41 1046.500h13v12l-13-2z" fill="#fff" /></P>
        <P b="84 1010 84 70">
          <circle cx="131" cy="1040" r="9.700" stroke="#fff" strokeWidth="1.500" />
          <path d="M124 1047l-12.500 13" stroke="#fff" strokeWidth="1.700" />
        </P>
        <P b="168 1010 88 70">
          <path d="M197 1031v4.500h18.500v-4.500M197 1038.500h18.500v12.500H197zM197 1058v-4.500h18.500v4.500M223.500 1031v6M223.500 1043v15" stroke="#fff" strokeWidth="1.400" />
          <path d="M222 1039h3.500v3.500H222z" fill="#fff" />
        </P>
        <P b="256 1010 87 70">
          <path d="M278 1037l17-11q4-2.500 8 0l17 11v14h-42z" fill="#0a5ba8" />
          <path d="M281 1037h36v20h-36z" fill="#f1f1f1" />
          <path d="M278 1037l21 15 21-15v26h-42z" fill="#1d9fdf" />
          <path d="M320 1037l-21 13 21 13z" fill="#3ac6f3" />
          <path d="M278 1063h42l-21-14z" fill="#2aa9e6" opacity=".9" />
          <Run x={264} />
        </P>
        <P b="343 1010 87 70">
          <circle cx="386" cy="1045" r="20.800" fill="#fafafa" />
          <g strokeLinecap="round" strokeWidth="5.500">
            <path d="M374.500 1041.500h7.500M382 1033.500h.1" stroke="#36c5f0" />
            <path d="M389.500 1033.500v7.500M397 1041.500h.1" stroke="#2eb67d" />
            <path d="M397 1048.500h-7.500M389.500 1056.500h.1" stroke="#ecb22e" />
            <path d="M382 1056.500v-7.500M374.500 1048.500h.1" stroke="#e01e5a" />
          </g>
          <Run x={351} />
        </P>
        <P b="430 1010 87 70">
          <path d="M483 1034l-26.500 19.500q-1.500 1-2.700-.2l-1.600-1.700q-1-1.200.2-2.300l30.600-25z" fill="#0b6fb8" />
          <path d="M483 1056l-26.500-21q-1.500-1-2.700.2l-1.600 1.700q-1 1.200.2 2.300l30.600 26.500z" fill="#1389d4" />
          <path d="M482.500 1024l10.500 4.500q1 .6 1 2v29q0 1.400-1 2l-10.500 4.500z" fill="#2aaaf4" />
        </P>
        <P b="517 1010 87 70">
          <rect x="540" y="1025" width="39.500" height="40" rx="11" fill="#4a8cff" />
          <path d="M548 1040q0-2 2-2h13q3 0 3 3v8.500q0 2.500-2 2.500h-13q-3 0-3-3zM567.500 1043.500l4-4.500v13l-4-4z" fill="#fff" />
        </P>
        <P b="604 1010 87 70">
          <path d="M636 1026h31v10h-31z" fill="#41a5ee" />
          <path d="M636 1036h31v9h-31z" fill="#2b7cd3" />
          <path d="M636 1045h31v9h-31z" fill="#185abd" />
          <path d="M636 1054h31v9.500h-31z" fill="#103f91" />
          <rect x="626" y="1034" width="21.500" height="21.500" rx="2" fill="#1a50b5" />
          <text x="628.500" y="1050.500" fontSize="16" fontWeight="700" textLength="16" lengthAdjust="spacingAndGlyphs" fill="#fff">W</text>
        </P>
        <P b="691 1010 87 70">
          <path d="M715.500 1031q0-1.500 1.500-1.500h12l4 5.500h-17.500z" fill="#e09b06" />
          <path d="M715.500 1035h14l4.500-3h17q1.500 0 1.500 1.500v24.500q0 1.500-1.500 1.500h-34q-1.500 0-1.500-1.500z" fill="#ffd65a" />
          <path d="M722 1060.500v-12.500q0-3 3-3h18.500q3 0 3 3v12.500h-6v-9h-12.500v9z" fill="#3693d9" />
          <path d="M728.500 1051.500h12v7h-12z" fill="#f8c534" />
          <Run x={699} />
        </P>
        <P b="778 1010 87 70">
          <circle cx="821" cy="1045" r="19.500" fill="#fbc935" />
          <path d="M821 1045L804 1035.500A19.500 19.500 0 0 0 821 1064.500l9-13z" fill="#1a9d58" />
          <path d="M821 1036.500h17.200A19.500 19.500 0 0 0 804.200 1035.300l8.800 14z" fill="#dc4b3e" />
          <circle cx="821" cy="1045" r="9" fill="#f4f4f4" />
          <circle cx="821" cy="1045" r="7.300" fill="#4c8bf5" />
          <Run x={786} />
        </P>
        <P b="865 1010 87 70">
          <path d="M908 1024l10.500 10.500-10.500 10.500-10.500-10.500z" fill="#ff7b7b" />
          <path d="M897 1035l10 10-10 10.500-10-10.500z" fill="#7cabff" />
          <path d="M919 1035l10 10-10 10.500-10-10.500z" fill="#87d162" />
          <path d="M908 1046l10.500 9.500-10.500 10.500-10.500-10.500z" fill="#ffe27a" />
          <path d="M901 1030l7 8v16M908 1038l8 7.500" stroke="#231008" strokeWidth="2.500" />
          <circle cx="908" cy="1054" r="3.300" fill="#231008" />
          <circle cx="917" cy="1045" r="3.300" fill="#231008" />
          <circle cx="908" cy="1037.500" r="2.800" fill="#231008" />
        </P>
        <P b="952 1010 87 70">
          <circle cx="995" cy="1045" r="19.700" fill="#7b2fa6" />
          <circle cx="995" cy="1045" r="14.500" fill="#f5f0fa" />
          <path d="M986 1036.500l4 2q5-1.500 10 0l4.500-2q1 3 .3 5 2 2.500 1.200 6-1 5-7 6 1.500 1.500 1.500 4v3h-9v-4q-4 1-6-3-1-1.500-2.500-2.500 2.500-.5 4 2 1.500 2 4.500 1 0-1.200.8-2.300-5.500-1-6.300-6-.6-3.500 1-6-.9-2-1-3.200z" fill="#6f2c9c" />
          <Run x={960} />
        </P>
        <P b="1040 1010 85 70" className="ml-px bg-[#563d37]">
          <path d="M1070.500 1027.500q0-1.500 1.500-1.500h14v10h-15.500z" fill="#21a366" />
          <path d="M1086 1026h15q1.500 0 1.500 1.500v8.500H1086z" fill="#33c481" />
          <path d="M1070.500 1036h15.500v9h-15.500z" fill="#107c41" />
          <path d="M1086 1036h16.500v9H1086z" fill="#21a366" />
          <path d="M1070.500 1045h32v18.500h-32z" fill="#185c37" />
          <path d="M1086 1045h16.500v9H1086z" fill="#107c41" />
          <rect x="1061" y="1034" width="21.500" height="21.500" rx="2" fill="#0f7a40" />
          <text x="1066.500" y="1050.500" fontSize="16" fontWeight="700" textLength="11" lengthAdjust="spacingAndGlyphs" fill="#fff">X</text>
          <Run x={1040} w={85} />
        </P>
        <P b="1250 1010 60 70" className="ml-[125px]">
          <circle cx="1278" cy="1046.500" r="18.500" fill="#fff" />
          <circle cx="1278" cy="1046.500" r="15.800" fill="#1296db" />
          <text x="1269" y="1059" fontSize="34" fontWeight="800" fill="#fff">?</text>
          <circle cx="1292.500" cy="1054" r="8.500" fill="#1687c8" />
          <text x="1290" y="1060" fontSize="15" fontWeight="700" fill="#fff">i</text>
        </P>
        <P b="1310 1010 400 70">
          <path d="M1325.500 1048.500l8.500-8.500 8.500 8.500" stroke="#fff" strokeWidth="1.700" />
          <g stroke="#c9c4c6" strokeWidth="1.500">
            <rect x="1382.500" y="1038.500" width="12" height="13" rx="1.500" />
            <path d="M1395 1043.500l5-4v11.500l-5-4M1383 1034q7-3.500 14 0M1383 1056q7 3.500 14 0" />
          </g>
          <path d="M1438 1053q-5.500 0-5.500-5t6-5.500q2-6.500 8-6.500t7 7q6 .5 6 5t-5.500 5z" fill="#bdb7ba" />
          <path d="M1439 1053q-4 0-5.500-2.500l14-7 8 .5q4.500 1 4.500 4.500t-5.500 4.500z" fill="#fff" />
          <path d="M1452.500 1042l8 17.500h-15.500z" fill="#fbbc15" />
          <path d="M1452.500 1048v6M1452.500 1055.500v2" stroke="#222" strokeWidth="1.500" />
          <path d="M1491 1039h22v14h-22z" stroke="#fff" strokeWidth="2" />
          <path d="M1493.500 1041.500h6.500v9h-6.500zM1513.500 1043h2.500v5h-2.500z" fill="#fff" />
          <g stroke="#e8eced" strokeWidth="1.500">
            <path d="M1549.500 1056.500q1-18 20-20M1554 1056.500q1.500-13 16-14.500M1559 1056.500q1.500-7.500 10.500-9" />
            <path d="M1563.500 1056.500q1-3.500 5-4.500" />
          </g>
          <circle cx="1568.500" cy="1055.500" r="1.800" fill="#fff" />
          <path d="M1601.500 1040.500h4l5-5v19.500l-5-5h-4zM1615 1042q3 3.500 0 7M1619 1039q4.500 6 0 13M1623 1034.500q6.500 9.500 0 21" stroke="#fff" strokeWidth="1.500" />
          <path d="M1671.500 1059.500l1-7 10.500-18.500q2.500-3.500 5-.5 1 1.500-.5 4.500l-10 18zM1680.500 1037l6 3.500M1671 1047q-8.500 0-8.500 6t8 6.500M1686.500 1042q5.500-1.500 5.500 1.500 0 3-5 5l-3.500.5" stroke="#fff" strokeWidth="2" strokeLinecap="round" />
        </P>
        <div className="ml-[16px] w-[86px] pt-[6px] text-[20.500px] text-white">
          <T className="h-[33px] w-[87px] leading-[26px]">12:52 AM</T>
          <T className="ml-[2px] w-[80px] leading-[26px]">4/2/2021</T>
        </div>
        <P b="1840 1010 80 70" className="ml-[28px]">
          <path d="M1848 1031.500h28v21.500h-11l-6 5v-5h-11z" fill="#fff" />
          <path d="M1854 1038h16M1854 1042.500h16M1854 1047h9" stroke="#0c1c22" strokeWidth="1.500" />
          <circle cx="1874.500" cy="1058" r="14" fill="#262b2e" stroke="#7d8386" strokeWidth="1.200" />
          <text x="1869.500" y="1065" fontSize="19" fontWeight="600" textLength="10" lengthAdjust="spacingAndGlyphs" fill="#fff">3</text>
          <path d="M1912 1010v70" stroke="#5b686c" strokeWidth="1.500" />
        </P>
      </div>
    </div>
  );
}

function Toast() {
  return (
    <div className="absolute top-[776px] left-[1255px] flex h-[214px] w-[637px] bg-[#1f1f1f]">
      <P b="1283 828 86 64" className="mt-[52px] ml-[28px]">
        <path d="M1303 845q6-13 21-13 22 0 28 24l-20 8z" fill="#8f8f8f" />
        <path d="M1307 885.500q-18-1-23.500-17-1.500-20 17-24.500 10-1.500 17 4l16 11-43 26z" fill="#b8b8b8" />
        <path d="M1332 859q12-9 23-5 12 5 12 17 0 8-5 12z" fill="#dcdcdc" />
        <path d="M1288 876l44.500-17 30.500 22q-4 5.500-12 5.500h-48q-10 0-15-10.500z" fill="#fff" />
      </P>
      <div className="ml-[26px] pt-[41px] text-[#a5a5a5]">
        <T className="w-[206px] text-[23.500px] leading-[26px] font-semibold text-white">Screenshot saved</T>
        <T className="mt-[6px] w-[397px] text-[24.500px] leading-[34px]">The screenshot was added to your</T>
        <T className="w-[114px] text-[24.500px] leading-[34px]">OneDrive.</T>
        <T className="mt-[10px] w-[87px] text-[19.500px] leading-[28px]">OneDrive</T>
      </div>
    </div>
  );
}

export default function App() {
  return (
    <div className="relative flex h-[1080px] w-[1920px] flex-col overflow-hidden bg-[#f3f2f1] font-['Open_Sans',sans-serif]">
      <TitleBar />
      <Tabs />
      <div className="flex h-[170px] border-b-4 border-[#d0d0ce]">
        <Clipboard />
        <FontGroup />
        <Alignment />
        <NumberGroup />
        <Styles />
        <Cells />
        <Editing />
        <Analysis />
        <P b="1884 262 24 24" className="mt-[142px] ml-[86px]"><path d="M1888 279l8.500-8.500 8.500 8.500" stroke={INK} strokeWidth="1.900" /></P>
      </div>
      <QuickAccess />
      <FormulaBar />
      <Grid />
      <SheetTabs />
      <StatusBar />
      <Taskbar />
      <Toast />
    </div>
  );
}
